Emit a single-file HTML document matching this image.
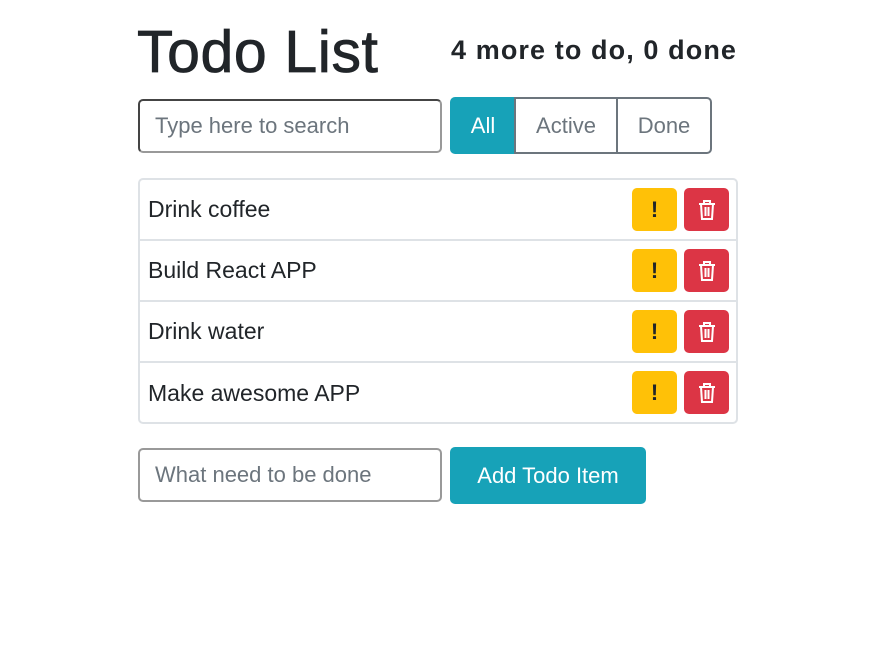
<!DOCTYPE html>
<html><head><style>
body{margin:0;width:871px;height:660px;background:#fff;font-family:"Liberation Sans",sans-serif;color:#212529;position:relative;overflow:hidden}
.a{position:absolute;box-sizing:border-box}
h1{position:absolute;left:137px;top:16px;margin:0;font-size:59px;font-weight:normal;line-height:72px;letter-spacing:0.6px;-webkit-text-stroke:0.8px #212529}
.cnt{left:451px;top:32px;font-size:27px;font-weight:bold;line-height:36px;letter-spacing:1.1px}
.inp{border:2px solid #555;border-radius:5px;font-size:22px;color:#6c757d;padding-left:15px;display:flex;align-items:center}
.btn{border:2px solid #6c757d;font-size:22px;color:#6c757d;display:flex;align-items:center;justify-content:center}
.list{left:138px;top:178px;width:600px;height:246px;border:2px solid #dee2e6;border-radius:5px}
.row{position:absolute;left:0;width:596px;height:61px;border-bottom:2px solid #dee2e6;font-size:23px;padding-left:8px;display:flex;align-items:center;box-sizing:border-box}
.y,.r{position:absolute;top:8px;width:45px;height:43px;border-radius:5px;display:flex;align-items:center;justify-content:center}
.y{left:492px;background:#ffc107;font-weight:bold;font-size:22px;color:#212529}
.r{left:544px;background:#dc3545}
</style></head><body>
<h1>Todo List</h1>
<div class="a cnt">4 more to do, 0 done</div>
<div class="a inp" style="left:138px;top:99px;width:304px;height:54px;border-color:#444 #999 #999 #444">Type here to search</div>
<div class="a btn" style="left:450px;top:97px;width:66px;height:57px;background:#17a2b8;border-color:#17a2b8;color:#fff;border-radius:5px 0 0 5px">All</div>
<div class="a btn" style="left:514px;top:97px;width:104px;height:57px;">Active</div>
<div class="a btn" style="left:616px;top:97px;width:96px;height:57px;border-radius:0 5px 5px 0">Done</div>
<div class="a list">
<div class="row" style="top:0">Drink coffee<div class="y">!</div><div class="r"><svg width="20" height="22" viewBox="0 0 20 22" fill="none" stroke="#fff" stroke-width="2"><path d="M2 5h16M7 5V2h6v3M4 5l1 15h10l1-15M8.5 8v9M11.5 8v9"/></svg></div></div>
<div class="row" style="top:61px">Build React APP<div class="y">!</div><div class="r"><svg width="20" height="22" viewBox="0 0 20 22" fill="none" stroke="#fff" stroke-width="2"><path d="M2 5h16M7 5V2h6v3M4 5l1 15h10l1-15M8.5 8v9M11.5 8v9"/></svg></div></div>
<div class="row" style="top:122px">Drink water<div class="y">!</div><div class="r"><svg width="20" height="22" viewBox="0 0 20 22" fill="none" stroke="#fff" stroke-width="2"><path d="M2 5h16M7 5V2h6v3M4 5l1 15h10l1-15M8.5 8v9M11.5 8v9"/></svg></div></div>
<div class="row" style="top:183px;border-bottom:none">Make awesome APP<div class="y">!</div><div class="r"><svg width="20" height="22" viewBox="0 0 20 22" fill="none" stroke="#fff" stroke-width="2"><path d="M2 5h16M7 5V2h6v3M4 5l1 15h10l1-15M8.5 8v9M11.5 8v9"/></svg></div></div>
</div>
<div class="a inp" style="left:138px;top:448px;width:304px;height:54px;border-color:#999">What need to be done</div>
<div class="a btn" style="left:450px;top:447px;width:196px;height:57px;background:#17a2b8;border-color:#17a2b8;color:#fff;border-radius:5px">Add Todo Item</div>
</body></html>
